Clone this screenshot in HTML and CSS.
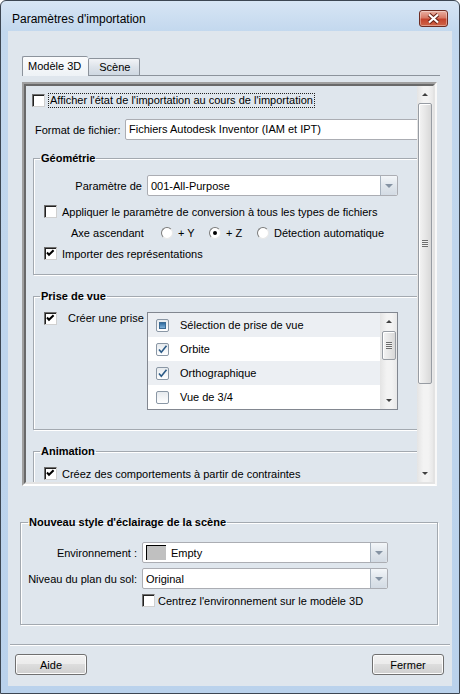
FILE: index.html
```html
<!DOCTYPE html>
<html lang="fr">
<head>
  <meta charset="UTF-8">
  <meta name="viewport" content="width=device-width, initial-scale=1.0">
  <title>Paramètres d'importation</title>
  <link rel="stylesheet" href="styles.css">
</head>
<body>

  <div class="window">
    <div class="titlebar">
      <span class="title">Paramètres d'importation</span>
      <button class="close" aria-label="Fermer">
        <svg width="13" height="11" viewBox="0 0 13 11"><path d="M2 1.5 L11 9.5 M11 1.5 L2 9.5" stroke="#6a2418" stroke-width="4.2"/><path d="M2 1.5 L11 9.5 M11 1.5 L2 9.5" stroke="#fff" stroke-width="2.2"/></svg>
      </button>
    </div>

    <div class="client">
      <div class="tabs">
        <span class="tab active">Modèle 3D</span>
        <span class="tab">Scène</span>
      </div>

      <div class="tabpage">
        <div class="scrollbox">
          <div class="scrollinner">
            <div class="viewport">
              <div class="content">

                <div class="row toprow">
                  <span class="cb"></span>
                  <span class="focus">Afficher l'état de l'importation au cours de l'importation</span>
                </div>

                <div class="row format">
                  <span class="format-label">Format de fichier:</span>
                  <span class="textbox">Fichiers Autodesk Inventor (IAM et IPT)</span>
                </div>

                <fieldset class="group geo">
                  <legend>Géométrie</legend>
                  <div class="row param">
                    <span class="param-label">Paramètre de</span>
                    <div class="combo wide">
                      <span class="combo-text">001-All-Purpose</span>
                      <span class="combo-btn"><i class="tri"></i></span>
                    </div>
                  </div>
                  <div class="row check r-apply">
                    <span class="cb"></span>
                    <span class="cb-text">Appliquer le paramètre de conversion à tous les types de fichiers</span>
                  </div>
                  <div class="row axis">
                    <span class="axis-label">Axe ascendant</span>
                    <span class="radio-opt"><span class="rb"></span>+ Y</span>
                    <span class="radio-opt"><span class="rb on"></span>+ Z</span>
                    <span class="radio-opt last"><span class="rb"></span>Détection automatique</span>
                  </div>
                  <div class="row check r-import">
                    <span class="cb on"><svg width="11" height="11" viewBox="0 0 11 11"><path d="M2 4.5 L4 6.8 L8.6 2.2" fill="none" stroke="#000" stroke-width="2"/></svg></span>
                    <span class="cb-text">Importer des représentations</span>
                  </div>
                </fieldset>

                <fieldset class="group view">
                  <legend>Prise de vue</legend>
                  <div class="row view-row">
                    <span class="cb on"><svg width="11" height="11" viewBox="0 0 11 11"><path d="M2 4.5 L4 6.8 L8.6 2.2" fill="none" stroke="#000" stroke-width="2"/></svg></span>
                    <span class="view-label">Créer une prise</span>
                    <div class="listbox">
                      <div class="items">
                        <div class="item alt"><span class="lcb mixed"><i></i></span>Sélection de prise de vue</div>
                        <div class="item"><span class="lcb"><svg width="11" height="11" viewBox="0 0 11 11"><path d="M2 5.5 L4.3 8.3 L9.5 1.8" fill="none" stroke="#2b5a86" stroke-width="1.6"/></svg></span>Orbite</div>
                        <div class="item alt"><span class="lcb"><svg width="11" height="11" viewBox="0 0 11 11"><path d="M2 5.5 L4.3 8.3 L9.5 1.8" fill="none" stroke="#2b5a86" stroke-width="1.6"/></svg></span>Orthographique</div>
                        <div class="item"><span class="lcb"></span>Vue de 3/4</div>
                      </div>
                      <div class="lscroll">
                        <span class="arrow up"></span>
                        <span class="thumb small"><span class="grip"></span></span>
                        <span class="spacer"></span>
                        <span class="arrow down"></span>
                      </div>
                    </div>
                  </div>
                </fieldset>

                <fieldset class="group anim">
                  <legend>Animation</legend>
                  <div class="row check r-anim">
                    <span class="cb on"><svg width="11" height="11" viewBox="0 0 11 11"><path d="M2 4.5 L4 6.8 L8.6 2.2" fill="none" stroke="#000" stroke-width="2"/></svg></span>
                    <span class="cb-text">Créez des comportements à partir de contraintes</span>
                  </div>
                </fieldset>

              </div>
            </div>
            <div class="vscroll">
              <span class="arrow up"></span>
              <span class="thumb big"><span class="grip"></span></span>
              <span class="spacer"></span>
              <span class="arrow down"></span>
            </div>
          </div>
        </div>
      </div>

      <fieldset class="group light">
        <legend>Nouveau style d'éclairage de la scène</legend>
        <div class="row env">
          <span class="light-label">Environnement :</span>
          <div class="combo">
            <span class="combo-text"><span class="swatch"></span>Empty</span>
            <span class="combo-btn"><i class="tri"></i></span>
          </div>
        </div>
        <div class="row env second">
          <span class="light-label">Niveau du plan du sol:</span>
          <div class="combo">
            <span class="combo-text">Original</span>
            <span class="combo-btn"><i class="tri"></i></span>
          </div>
        </div>
        <div class="row check r-center">
          <span class="cb"></span>
          <span class="cb-text">Centrez l'environnement sur le modèle 3D</span>
        </div>
      </fieldset>

      <div class="separator"></div>

      <div class="buttons">
        <button class="btn">Aide</button>
        <button class="btn">Fermer</button>
      </div>
    </div>
  </div>

</body>
</html>
```

FILE: styles.css
```css
* {
  box-sizing: border-box;
}
body {
  margin: 0;
  font-family: "Liberation Sans", Arial, sans-serif;
  font-size: 11px;
  color: #000;
  background: #fff;
}

/* window frame */
.window {
  width: 460px;
  height: 694px;
  display: flex;
  flex-direction: column;
  padding: 0 7px 7px;
  border: 1px solid #3c4652;
  border-radius: 6px 6px 0 0;
  background: linear-gradient(to bottom, #d7e5f4, #c3d8ee 30px, #bad2ec);
}
.titlebar {
  height: 30px;
  display: flex;
  justify-content: space-between;
  align-items: flex-start;
  padding: 9px 4px 0;
}
.title {
  font-size: 12px;
  line-height: 17px;
  padding-top: 1px;
}
.close {
  width: 29px;
  height: 17px;
  padding: 0;
  display: flex;
  align-items: center;
  justify-content: center;
  border: 1px solid #6e2c22;
  border-radius: 3px;
  background: linear-gradient(to bottom, #eab0a2, #d87a66 45%, #c4432c 55%, #cf6548);
  box-shadow: inset 0 0 0 1px rgba(255, 255, 255, 0.35);
}

.client {
  flex: 1;
  display: flex;
  flex-direction: column;
  background: #dfe6ed;
}

/* tabs */
.tabs {
  display: flex;
  align-items: flex-end;
  height: 19px;
  margin: 25px 0 0 14px;
  position: relative;
  z-index: 1;
}
.tab {
  height: 17px;
  padding: 0 9px 0 10px;
  line-height: 16px;
  border: 1px solid #8c939c;
  border-bottom: none;
  border-radius: 2px 2px 0 0;
  background: linear-gradient(to bottom, #f2f4f7, #dde3ea 50%, #cfd8e2);
}
.tab.active {
  height: 20px;
  margin-bottom: -1px;
  padding: 0 7px 0 5px;
  line-height: 19px;
  border-right: none;
  background: linear-gradient(to bottom, #fbfcfd, #eef2f6);
}
.tabpage {
  margin: 0 12px 0 14px;
  padding-top: 6px;
  border-top: 1px solid #8c939c;
}

/* scrolling panel */
.scrollbox {
  width: 415px;
  height: 404px;
  border: 2px solid;
  border-color: #a0a0a0 #f8f8f8 #fff #a0a0a0;
}
.scrollinner {
  height: 100%;
  display: flex;
  border: 2px solid;
  border-color: #696969 #e3e3e3 #e3e3e3 #696969;
}
.viewport {
  width: 391px;
  overflow: hidden;
}
.content {
  width: 430px;
  padding-left: 6px;
}

.row {
  display: flex;
  align-items: center;
}
.cb {
  width: 13px;
  height: 13px;
  flex: none;
  display: flex;
  align-items: center;
  justify-content: center;
  background: #fff;
  border: 1px solid #1c1c1c;
  border-color: #6f6f6f #d0d0d0 #d0d0d0 #6f6f6f;
  box-shadow: inset 1px 1px 0 #222;
}
.cb-text {
  margin-left: 5px;
}

.toprow {
  height: 15px;
  margin-top: 7px;
}
.focus {
  margin-left: 3px;
  padding: 0 1px;
  line-height: 13px;
  border: 1px dotted #222;
}

.format {
  height: 21px;
  margin-top: 11px;
}
.format-label {
  width: 93px;
  padding-left: 3px;
}
.textbox {
  width: 305px;
  height: 21px;
  padding-left: 3px;
  line-height: 19px;
  background: #fff;
  border: 1px solid #abadb3;
  border-radius: 2px;
}

/* group boxes */
.group {
  margin: 0;
  padding: 0 0 0 10px;
  min-width: 0;
  border: 1px solid #a3a9b0;
  box-shadow: 1px 1px 0 #fff, inset 1px 1px 0 #fff;
}
.group legend {
  padding: 0 1px;
  margin-left: -4px;
  font-weight: bold;
  line-height: 13px;
}
.geo {
  width: 404px;
  margin: 12px 0 0 1px;
  padding-bottom: 13px;
}
.param {
  height: 21px;
  margin-top: 10px;
}
.param-label {
  width: 98px;
  margin-right: 5px;
  text-align: right;
}
.combo {
  width: 246px;
  height: 21px;
  display: flex;
  background: #fff;
  border: 1px solid #abadb3;
  border-radius: 2px;
}
.combo.wide {
  width: 251px;
}
.combo-text {
  flex: 1;
  display: flex;
  align-items: center;
  padding-left: 3px;
}
.combo-btn {
  width: 17px;
  display: flex;
  align-items: center;
  justify-content: center;
  border-left: 1px solid #a7b2be;
  border-radius: 0 2px 2px 0;
  background: linear-gradient(to bottom, #f3f6f9, #e0e6ec 50%, #d3dbe4);
}
.tri {
  width: 0;
  height: 0;
  border-left: 4px solid transparent;
  border-right: 4px solid transparent;
  border-top: 4px solid #8593a3;
}

.check {
  height: 15px;
}
.r-apply {
  margin-top: 8px;
}
.axis {
  height: 15px;
  margin-top: 6px;
}
.axis-label {
  width: 117px;
  padding-left: 27px;
}
.radio-opt {
  width: 48px;
  display: flex;
  align-items: center;
  gap: 5px;
}
.radio-opt.last {
  width: auto;
}
.rb {
  width: 12px;
  height: 12px;
  flex: none;
  display: flex;
  align-items: center;
  justify-content: center;
  border-radius: 50%;
  background: #fff;
  border: 1px solid;
  border-color: #7a7a7a #e8e8e8 #e8e8e8 #7a7a7a;
}
.rb.on::after {
  content: "";
  width: 4px;
  height: 4px;
  border-radius: 50%;
  background: #000;
}
.r-import {
  margin-top: 6px;
}

.view {
  width: 404px;
  margin: 15px 0 0 1px;
  padding-bottom: 19px;
}
.view-row {
  align-items: flex-start;
  margin-top: 9px;
}
.view-label {
  width: 79px;
  margin-left: 11px;
  line-height: 13px;
}
.listbox {
  width: 251px;
  height: 98px;
  display: flex;
  background: #fff;
  border: 1px solid #828790;
}
.items {
  flex: 1;
}
.item {
  height: 24px;
  display: flex;
  align-items: center;
  padding-left: 8px;
}
.item.alt {
  background: #eceff3;
}
.lcb {
  width: 13px;
  height: 13px;
  margin-right: 11px;
  display: flex;
  align-items: center;
  justify-content: center;
  border: 1px solid #8a97a5;
  border-radius: 2px;
  background: linear-gradient(to bottom, #e6eaee, #fff);
}
.lcb.mixed i {
  width: 7px;
  height: 7px;
  background: linear-gradient(to bottom, #2e6a9e, #7fb0d9);
  border: 1px solid #3c6b94;
}

.lscroll,
.vscroll {
  width: 17px;
  display: flex;
  flex-direction: column;
  align-items: center;
  background: linear-gradient(to right, #e4e4e4, #f3f3f3 40%, #f3f3f3 70%, #e8e8e8);
}
.vscroll {
  width: 16px;
}
.arrow {
  height: 17px;
  width: 100%;
  flex: none;
  display: flex;
  align-items: center;
  justify-content: center;
}
.arrow::after {
  content: "";
  width: 0;
  height: 0;
  border-left: 3px solid transparent;
  border-right: 3px solid transparent;
}
.arrow.up::after {
  border-bottom: 3px solid #404040;
}
.arrow.down::after {
  border-top: 3px solid #404040;
}
.thumb {
  width: 14px;
  flex: none;
  display: flex;
  align-items: center;
  justify-content: center;
  border: 1px solid #979ca3;
  border-radius: 2px;
  background: linear-gradient(to right, #f4f4f4, #e7e7e7 50%, #d8d8d8);
  box-shadow: inset 1px 1px 0 #fff;
}
.thumb.small {
  height: 29px;
  margin-top: 1px;
}
.thumb.big {
  height: 281px;
}
.grip {
  width: 6px;
  height: 7px;
  background: repeating-linear-gradient(to bottom, #6d6d6d 0 1px, #f0f0f0 1px 2px);
}
.spacer {
  flex: 1;
}

.anim {
  width: 404px;
  margin: 15px 0 0 1px;
  padding-bottom: 20px;
}
.r-anim {
  margin-top: 8px;
}

/* lighting group */
.light {
  margin: 30px 14px 0 12px;
  padding: 0 0 16px 9px;
}
.light legend {
  margin-left: -2px;
}
.env {
  height: 21px;
  margin-top: 13px;
}
.env.second {
  margin-top: 5px;
}
.light-label {
  width: 107px;
  margin-right: 5px;
  display: flex;
  justify-content: flex-end;
  white-space: nowrap;
}
.swatch {
  width: 20px;
  height: 15px;
  margin-right: 5px;
  background: #c0c0c0;
  border-top: 1px solid #000;
  border-left: 1px solid #000;
}
.r-center {
  margin-top: 4px;
  padding-left: 112px;
}
.r-center .cb-text {
  margin-left: 3px;
}

.separator {
  margin: 19px 2px 0;
  border-top: 1px solid #a3a9b0;
  border-bottom: 1px solid #fff;
}
.buttons {
  display: flex;
  justify-content: space-between;
  padding: 0 8px 0 7px;
  margin-top: 8px;
}
.btn {
  width: 72px;
  height: 21px;
  padding: 0;
  font: inherit;
  border: 1px solid #707070;
  border-radius: 3px;
  background: linear-gradient(to bottom, #f2f2f2, #ebebeb 50%, #dddddd 50%, #cfcfcf);
  box-shadow: inset 0 0 0 1px #fcfcfc;
}
```
